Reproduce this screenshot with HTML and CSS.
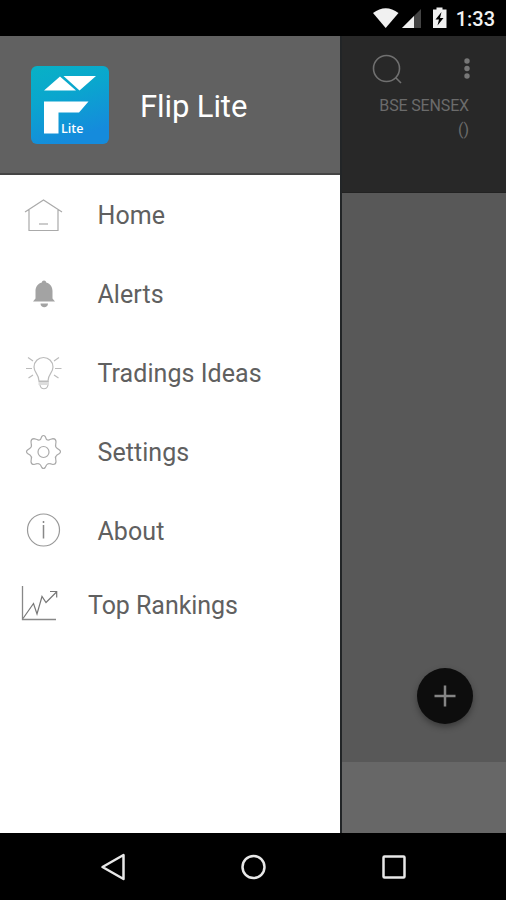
FILE: index.html
```html
<!DOCTYPE html>
<html lang="en">
<head>
<meta charset="utf-8">
<title>Flip Lite</title>
<link rel="stylesheet" href="styles.css">
</head>
<body>
<header class="status">
  <svg class="status-icons" viewBox="0 0 76 36" aria-hidden="true">
    <path fill="#f1f1f1" d="M2 13Q14.700 3.500 27.500 13L14.700 28Z"/>
    <path fill="#444" d="M50 9V28H31Z"/><path fill="#f1f1f1" d="M43 16V28H31Z"/>
    <path fill="#f1f1f1" fill-rule="evenodd" d="M62 9.500H65.500V7.500H71.500V9.500H75.500V28H62ZM70.500 12L64.500 19.500H68L66.500 25.500L72.500 18H69Z"/>
  </svg>
  <span class="clock">1:33</span>
</header>
<div class="screen">
  <aside class="drawer">
    <div class="brand">
      <svg class="logo" viewBox="0 0 78 78" aria-hidden="true">
        <defs><linearGradient id="blue" x1="0" y1="0" x2=".35" y2="1"><stop stop-color="#08b1c5"/><stop offset=".45" stop-color="#0aa6ce"/><stop offset="1" stop-color="#158bdc"/></linearGradient></defs>
        <rect width="78" height="78" rx="6" fill="url(#blue)"/>
        <path fill="#fff" d="M13 24.500L29 10.500L45 24.500ZM32.500 10H65L48.500 24.500ZM13 35.500H57.500L48 46.500H27.500V67.500H13Z"/>
        <text class="logo-text" x="30" y="67">Lite</text>
      </svg>
      <h1 class="title">Flip Lite</h1>
    </div>
    <nav class="menu">
      <a class="item"><svg class="icon" viewBox="0 0 40 40"><path d="M2 17L20.500 5L39 17M6 15V35.500H35V15" stroke="#aaa"/><path d="M16 29H25" stroke="#ccc" stroke-width="2"/></svg><span>Home</span></a>
      <a class="item"><svg class="icon" viewBox="0 0 40 40"><path fill="#a3a3a3" d="M21 6.500c1.300 0 2 .8 2.200 1.900C27.500 9.500 29.500 13 29.500 17v7.500l2.500 3H10l2.500-3V17c0-4 2-7.500 6.300-8.600C19 7.300 19.700 6.500 21 6.500ZM17.500 29.500H25c0 5-7.500 5-7.500 0Z"/></svg><span>Alerts</span></a>
      <a class="item"><svg class="icon" viewBox="0 0 40 40"><path stroke="#bbb" d="M16 28C16 21 11 20 11 14a9.500 9.500 0 0 1 19 0C30 20 25 21 25 28ZM15.500 29H26M15.500 31H26M17 32c1 5 7 5 8 0M3 15.500H9M32 15.500H38.500M5 4.500L10 8M36 4.500L31 8M5.500 25L10 22M35.500 25L31 22"/></svg><span>Tradings Ideas</span></a>
      <a class="item"><svg class="icon" viewBox="0 0 40 40"><path class="gear" stroke="#aaa" d="M18.800 4.500Q20.500 2.500 22.200 4.500L23.500 7.500Q25.300 8.700 27 7.500L30 6.700Q33 7 33 9.800L32.700 12.500Q32 15 34 16.200L36.500 18Q38.500 19.800 36.500 21.500L34 23Q32 24.500 32.700 27L33 29.500Q33 32.500 30 32.500L27 31.700Q25 31 23.500 33L22.200 35.500Q20.500 37.500 18.800 35.500L17.500 33Q16 31 14 31.700L11 32.500Q8 32.500 8 29.500L8.300 27Q9 24.500 7 23L4.500 21.500Q2.500 19.800 4.500 18L7 16.200Q9 15 8.300 12.500L8 9.800Q8 7 11 6.700L14 7.500Q15.700 8.700 17.500 7.500Z"/><circle cx="20.500" cy="20" r="5.500" stroke="#aaa"/></svg><span>Settings</span></a>
      <a class="item"><svg class="icon" viewBox="0 0 40 40"><circle cx="20.500" cy="19" r="16" stroke="#999"/><path stroke="#888" stroke-width="1.500" d="M20.500 14V27.500M20.500 10V12"/></svg><span>About</span></a>
      <a class="item rankings"><svg class="icon" viewBox="0 0 40 40"><path stroke="#888" d="M3.500 1V34.500H37" stroke-width="1.300"/><path stroke="#777" d="M4 33.500L14.500 18.500L18 29L23 11.500L27 17.500L37.500 7M31 6.500H37.700V12.500"/></svg><span>Top Rankings</span></a>
    </nav>
  </aside>
  <main class="content">
    <div class="toolbar">
      <div class="actions">
        <svg class="search" viewBox="0 0 32 32"><circle cx="14.500" cy="14.500" r="13" /><path d="M23.500 23.500L29 29"/></svg>
        <svg class="more" viewBox="0 0 8 24"><circle cx="4" cy="4" r="2.700"/><circle cx="4" cy="11.500" r="2.700"/><circle cx="4" cy="19" r="2.700"/></svg>
      </div>
      <div class="ticker">BSE SENSEX</div>
      <div class="change">()</div>
    </div>
    <div class="body"><button class="add" aria-label="Add"><svg viewBox="0 0 22 22"><path d="M11 .5V21.500M.5 11H21.500"/></svg></button></div>
    <div class="bottom"></div>
  </main>
</div>
<footer class="navbar">
  <svg viewBox="0 0 28 28"><path stroke-linejoin="round" d="M3.500 14L24.500 2V26Z"/></svg>
  <svg viewBox="0 0 28 28"><circle cx="14.500" cy="14" r="11"/></svg>
  <svg viewBox="0 0 28 28"><rect x="3.500" y="3.500" width="21" height="21" rx="1"/></svg>
</footer>
</body>
</html>
```
FILE: styles.css
```css
* { box-sizing: border-box; }
body { margin: 0; width: 506px; height: 900px; display: flex; flex-direction: column; overflow: hidden; background: #000; font-family: Roboto, "Liberation Sans", sans-serif; }
svg { display: block; flex: none; }
.status { height: 36px; display: flex; justify-content: flex-end; align-items: center; padding-right: 11px; color: #f1f1f1; }
.status-icons { width: 76px; height: 36px; margin-right: 9px; }
.clock { font-size: 20px; font-weight: 500; line-height: 36px; padding-top: 2px; }
.screen { flex: 1; display: flex; min-height: 0; }
.drawer { width: 340px; background: #fff; }
.brand { height: 139px; display: flex; align-items: center; gap: 31px; padding: 0 0 1px 31px; background: #616161; border-bottom: 2px solid #444; }
.logo { width: 78px; height: 78px; margin-top: 2px; }
.logo-text { font: 600 12.5px "Open Sans", sans-serif; fill: #fff; }
.title { margin: 6px 0 0; font-size: 31px; font-weight: 400; line-height: 36px; letter-spacing: -.1px; color: #fff; }
.menu { display: flex; flex-direction: column; padding-top: 1px; }
.item { height: 78.8px; display: flex; align-items: center; gap: 34.500px; padding-left: 23px; font-size: 25px; letter-spacing: .06px; color: #606060; white-space: nowrap; }
.item span { line-height: 30px; padding-top: 2px; }
.icon { width: 40px; height: 40px; fill: none; stroke-width: 1.2; }
.gear { stroke-linejoin: round; }
.rankings { height: 70px; padding-left: 19px; gap: 29px; letter-spacing: -.05px; }
.content { flex: 1; display: flex; flex-direction: column; border-left: 2px solid #222527; }
.toolbar { height: 157px; background: #282828; border-bottom: 1px solid #222; padding: 18px 37px 0 30px; color: #6b6b6b; font-size: 16px; text-align: right; white-space: nowrap; }
.actions { height: 42px; display: flex; justify-content: space-between; }
.search { width: 32px; height: 32px; fill: none; stroke: #707070; stroke-width: 1.6; }
.more { width: 8px; height: 24px; fill: #777; margin: 3px -2px 0 0; }
.ticker { line-height: 20px; letter-spacing: -.15px; }
.change { line-height: 27px; }
.body { flex: 1; display: flex; align-items: flex-end; justify-content: flex-end; padding: 0 33px 38px 0; background: #585858; }
.add { width: 56px; height: 56px; display: grid; place-items: center; padding: 0; border: 0; border-radius: 50%; background: #0d0d0d; box-shadow: 0 3px 6px rgba(0, 0, 0, .35); }
.add svg { width: 22px; height: 22px; fill: none; stroke: #858585; stroke-width: 2.5; }
.bottom { height: 71px; background: #676767; }
.navbar { height: 67px; display: flex; justify-content: center; align-items: center; gap: 112.5px; }
.navbar svg { width: 28px; height: 28px; fill: none; stroke: #e8e8e8; stroke-width: 2.5; }
```
